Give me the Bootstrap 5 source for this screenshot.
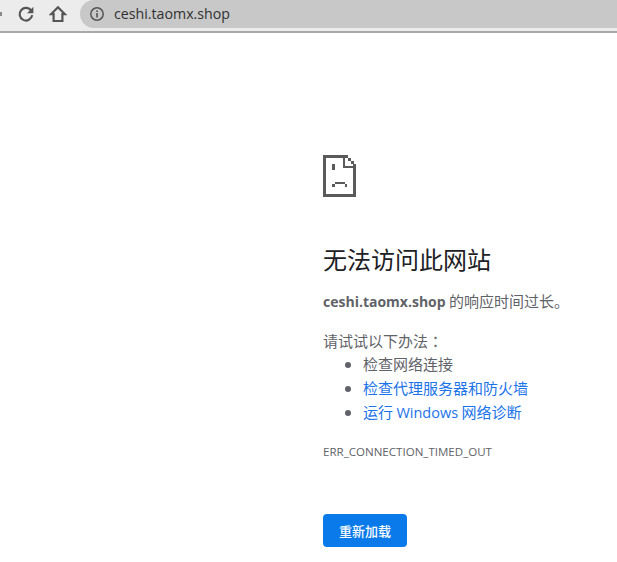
<!DOCTYPE html>
<html lang="zh">
<head>
<meta charset="utf-8">
<title>ceshi.taomx.shop</title>
<link href="https://cdn.jsdelivr.net/npm/bootstrap@5.3.0/dist/css/bootstrap.min.css" rel="stylesheet">
<style>
html,body{height:100%;overflow:hidden;background:#fff;}
body{font-family:"Noto Sans CJK SC",sans-serif;font-size:15px;color:#5f6368;}
.latin{font-family:"Open Sans",sans-serif;font-size:14.5px;}
.colon-tc{font-family:"Noto Sans CJK TC",sans-serif;}
.chrome-bar{height:33px;background:#ececec;border-bottom:2px solid #a8a8a8;overflow:hidden;}
.back-tip{width:10px;height:28px;flex:none;}
.tool-btn{width:32px;height:28px;flex:none;}
.addr-pill{height:28px;background:#c8c8c8;border-radius:15px 0 0 15px;color:#303030;margin-left:6px;padding-left:9px;gap:9px;}
.addr-text{font-family:"Open Sans",sans-serif;font-size:14.2px;}
.err-wrap{padding:122px 0 0 323px;}
.err-icon{display:block;width:33px;height:42px;}
.err-title{font-size:24px;font-weight:400;color:#202124;line-height:32px;margin:46px 0 0;font-family:"Noto Sans CJK SC",sans-serif;white-space:nowrap;}
.err-host{margin:14px 0 0;line-height:24px;white-space:nowrap;}
.err-host b{font-family:"Open Sans",sans-serif;font-size:14px;font-weight:700;}
.try-head{margin:15px 0 0;line-height:24px;}
.try-list{margin:-1px 0 0;padding-left:40px;line-height:24px;white-space:nowrap;}
.try-list a{color:#1a73e8;text-decoration:none;}
.err-code{font-family:"Open Sans",sans-serif;font-size:11.55px;line-height:16px;margin:19px 0 0;color:#5f6368;}
.reload-btn{margin-top:54px;width:84px;height:33px;padding:0;background:#0a7aea;border:0;border-radius:4px;color:#fff;font-size:13px;font-weight:500;}
</style>
</head>
<body>
<div class="chrome-bar d-flex align-items-start">
  <div class="back-tip d-flex align-items-center">
    <svg width="2" height="4" viewBox="0 0 2 4"><rect width="2" height="4" fill="#8a8a8a"/></svg>
  </div>
  <div class="tool-btn d-flex align-items-center justify-content-center">
    <svg width="18" height="18" viewBox="0 0 18 18"><path d="M14.4 6A6.3 6.3 0 1 0 15.2 10.2" fill="none" stroke="#555" stroke-width="2.2"/><path d="M16.4 1.8V8.2H10Z" fill="#555"/></svg>
  </div>
  <div class="tool-btn d-flex align-items-center justify-content-center">
    <svg width="18" height="18" viewBox="0 0 18 18"><path d="M9 2.2 2 9.2H4.6V16H13.4V9.2H16Z" fill="none" stroke="#555" stroke-width="2.2"/></svg>
  </div>
  <div class="addr-pill d-flex align-items-center flex-grow-1">
    <svg width="16" height="16" viewBox="0 0 16 16"><circle cx="8" cy="8" r="6.2" fill="none" stroke="#555" stroke-width="1.5"/><rect x="7.2" y="7" width="1.6" height="4.5" fill="#555"/><rect x="7.2" y="4.4" width="1.6" height="1.6" fill="#555"/></svg>
    <span class="addr-text">ceshi.taomx.shop</span>
  </div>
</div>
<main class="err-wrap">
  <svg class="err-icon" viewBox="0 0 33 42" shape-rendering="crispEdges" fill="#5a5a5a">
    <path d="M0 0H25V3H28V6H31V9H33V42H0ZM3 3V39H30V13H20V3ZM22 3V11H30V9H28V6H25V3Z" fill-rule="evenodd"/>
    <path d="M9 9h3v6H9ZM12 27h10v2h2v3h-2v-3H12v3H9v-3h3Z"/>
  </svg>
  <h1 class="err-title">无法访问此网站</h1>
  <p class="err-host"><b>ceshi.taomx.shop</b> 的响应时间过长。</p>
  <p class="try-head">请试试以下办法<span class="colon-tc" lang="zh-TW">：</span></p>
  <ul class="try-list">
    <li>检查网络连接</li>
    <li><a href="#">检查代理服务器和防火墙</a></li>
    <li><a href="#">运行 <span class="latin">Windows</span> 网络诊断</a></li>
  </ul>
  <p class="err-code">ERR_CONNECTION_TIMED_OUT</p>
  <button class="btn reload-btn" type="button">重新加载</button>
</main>
</body>
</html>
